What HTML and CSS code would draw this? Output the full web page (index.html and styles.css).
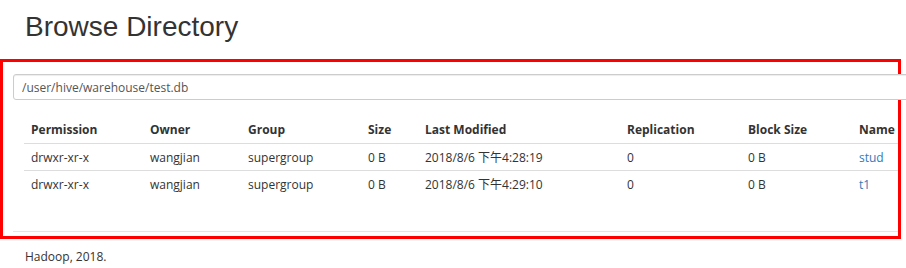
FILE: index.html
```html
<!DOCTYPE html>
<html lang="en">
<head>
  <meta charset="UTF-8" />
  <title>Browsing HDFS</title>
  <link rel="stylesheet" href="styles.css">
</head>
<body>
  <h1>Browse Directory</h1>

  <div class="highlight">
    <input class="path" type="text" value="/user/hive/warehouse/test.db">

    <table class="listing">
      <colgroup>
        <col class="c-perm"><col class="c-owner"><col class="c-group"><col class="c-size">
        <col class="c-mod"><col class="c-repl"><col class="c-block"><col class="c-name">
      </colgroup>
      <thead>
        <tr>
          <th>Permission</th>
          <th>Owner</th>
          <th>Group</th>
          <th>Size</th>
          <th>Last Modified</th>
          <th>Replication</th>
          <th>Block Size</th>
          <th>Name</th>
        </tr>
      </thead>
      <tbody>
        <tr>
          <td>drwxr-xr-x</td>
          <td>wangjian</td>
          <td>supergroup</td>
          <td>0 B</td>
          <td>2018/8/6 下午4:28:19</td>
          <td>0</td>
          <td>0 B</td>
          <td><a href="#">stud</a></td>
        </tr>
        <tr>
          <td>drwxr-xr-x</td>
          <td>wangjian</td>
          <td>supergroup</td>
          <td>0 B</td>
          <td>2018/8/6 下午4:29:10</td>
          <td>0</td>
          <td>0 B</td>
          <td><a href="#">t1</a></td>
        </tr>
      </tbody>
    </table>

    <hr>
  </div>

  <p class="footer">Hadoop, 2018.</p>
</body>
</html>
```

FILE: styles.css
```css
body {
  font-family: 'Open Sans', 'Noto Sans CJK SC', sans-serif;
  font-size: 12px;
  color: #333;
  background: #fff;
  margin: 0;
  overflow: hidden;
}
h1 {
  font-family: 'Liberation Sans', Arial, sans-serif;
  font-weight: 400;
  font-size: 28px;
  line-height: 34px;
  margin: 10px 0 0 25px;
  color: #333;
}
.highlight {
  width: 901px;
  margin-top: 15px;
  border: 3px solid #f00;
  padding: 12px 0 0 10px;
  box-sizing: border-box;
  height: 180px;
}
.path {
  display: block;
  width: 960px;
  height: 26px;
  box-sizing: border-box;
  border: 1px solid #ccc;
  border-radius: 3px;
  padding: 0 8px;
  font-family: inherit;
  font-size: 12px;
  color: #555;
  box-shadow: inset 0 1px 1px rgba(0,0,0,0.075);
}
.listing {
  border-collapse: collapse;
  table-layout: fixed;
  width: 874px;
  margin: 16px 0 0 11px;
}
.c-perm { width: 119px; }
.c-owner { width: 98px; }
.c-group { width: 120px; }
.c-size { width: 57px; }
.c-mod { width: 202px; }
.c-repl { width: 121px; }
.c-block { width: 111px; }
.c-name { width: 46px; }
th, td {
  text-align: left;
  padding: 0 7px;
  white-space: nowrap;
}
th {
  height: 27px;
  font-weight: 700;
  border-bottom: 1px solid #ddd;
}
td {
  height: 26px;
}
tbody tr + tr td {
  border-top: 1px solid #ddd;
}
a {
  color: #337ab7;
  text-decoration: none;
}
hr {
  border: 0;
  border-top: 1px solid #e5e5e5;
  margin: 34px 0 0 0;
}
.footer {
  margin: 9px 0 0 25px;
}
```
